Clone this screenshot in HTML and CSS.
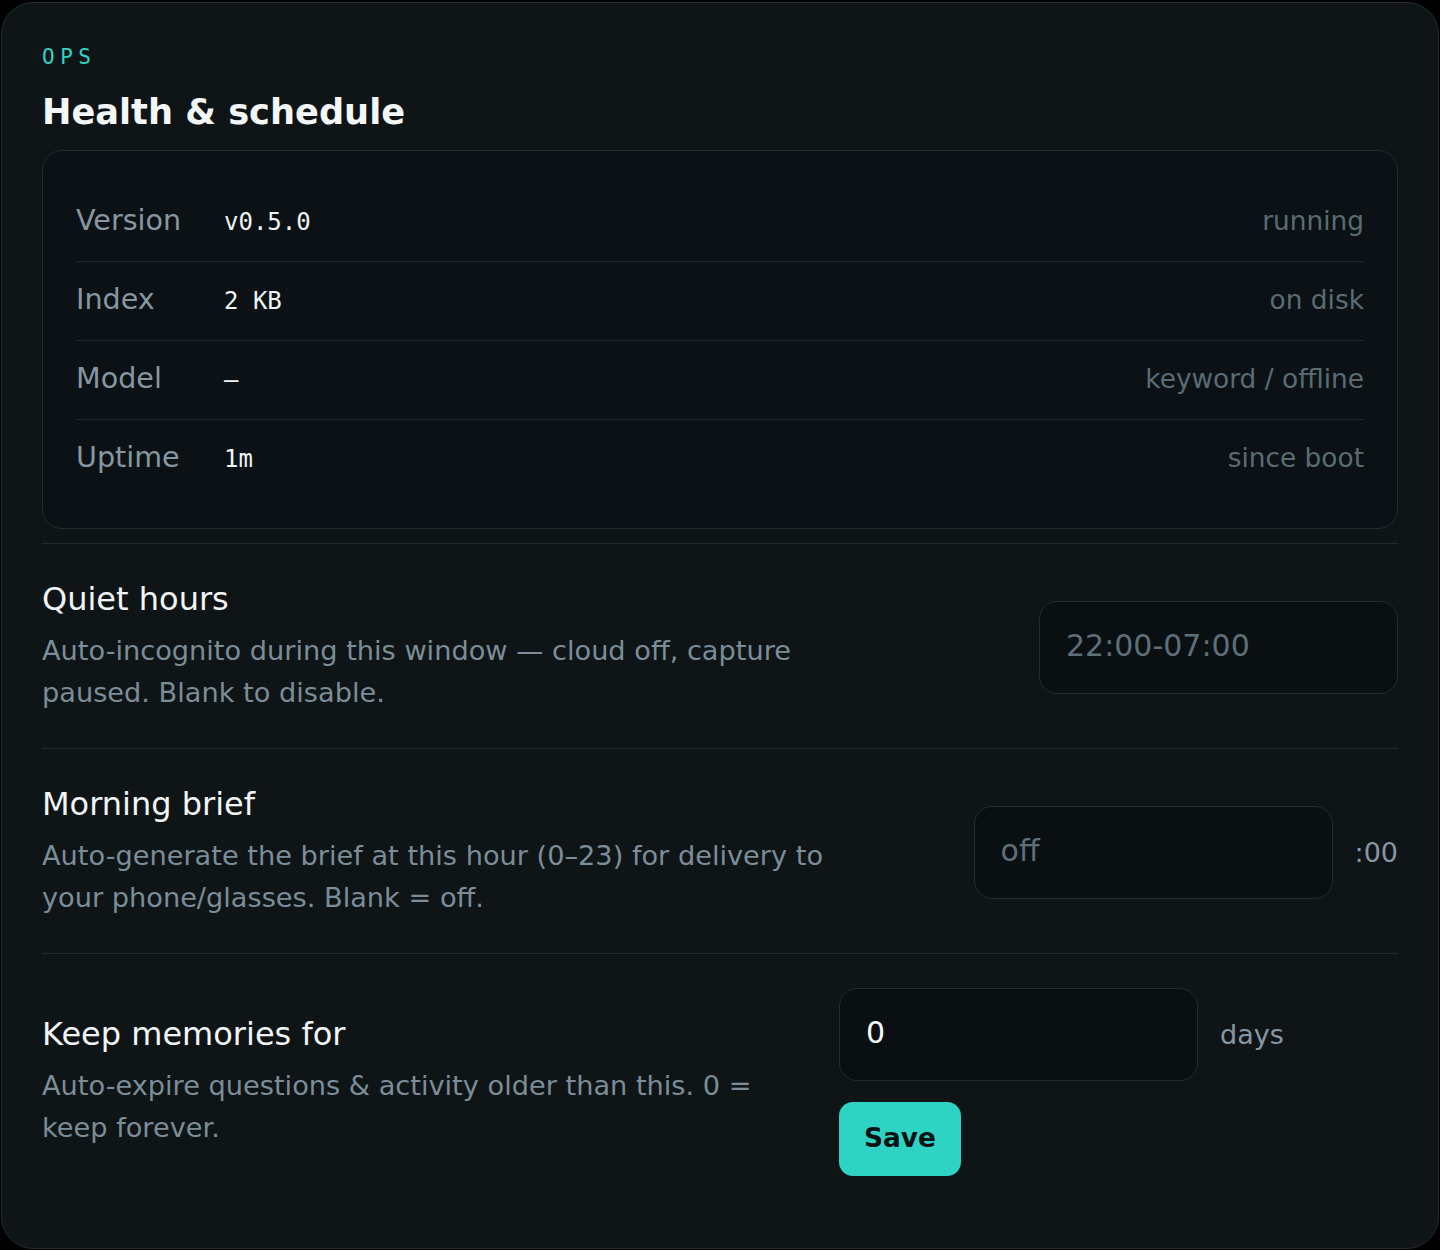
FILE: index.html
```html
<!DOCTYPE html>
<html lang="en">
<head>
    <meta charset="UTF-8">
    <meta name="viewport" content="width=device-width, initial-scale=1.0">
    <title>Health &amp; schedule</title>
    <link rel="stylesheet" href="styles.css">
</head>
<body>

<div class="card">
    <div class="eyebrow">OPS</div>
    <h2 class="card-title">Health &amp; schedule</h2>

    <!-- Status table -->
    <div class="stats">
        <div class="stat-row">
            <span class="stat-label">Version</span>
            <span class="stat-value">v0.5.0</span>
            <span class="stat-note">running</span>
        </div>
        <div class="stat-row">
            <span class="stat-label">Index</span>
            <span class="stat-value">2 KB</span>
            <span class="stat-note">on disk</span>
        </div>
        <div class="stat-row">
            <span class="stat-label">Model</span>
            <span class="stat-value">–</span>
            <span class="stat-note">keyword / offline</span>
        </div>
        <div class="stat-row">
            <span class="stat-label">Uptime</span>
            <span class="stat-value">1m</span>
            <span class="stat-note">since boot</span>
        </div>
    </div>

    <!-- Quiet hours -->
    <div class="setting">
        <div class="setting-text">
            <h3>Quiet hours</h3>
            <p>Auto-incognito during this window — cloud off, capture paused. Blank to disable.</p>
        </div>
        <div class="setting-controls">
            <input type="text" class="field" placeholder="22:00-07:00">
        </div>
    </div>

    <!-- Morning brief -->
    <div class="setting">
        <div class="setting-text">
            <h3>Morning brief</h3>
            <p>Auto-generate the brief at this hour (0–23) for delivery to your phone/glasses. Blank = off.</p>
        </div>
        <div class="setting-controls">
            <input type="text" class="field" placeholder="off">
            <span class="suffix">:00</span>
        </div>
    </div>

    <!-- Retention -->
    <div class="setting last">
        <div class="setting-text">
            <h3>Keep memories for</h3>
            <p>Auto-expire questions &amp; activity older than this. 0 = keep forever.</p>
        </div>
        <div class="setting-controls wide">
            <input type="text" class="field" value="0">
            <span class="suffix">days</span>
            <button type="button" class="save-btn">Save</button>
        </div>
    </div>
</div>

</body>
</html>
```

FILE: styles.css
```css
body {
    margin: 0;
    padding: 2px 1px 0;
    background: #000;
    font-family: "DejaVu Sans", Verdana, sans-serif;
}

.card {
    background: #0f1417;
    border: 1px solid #222c32;
    border-radius: 32px;
    padding: 42px 40px 38px;
}

.eyebrow {
    font-family: "DejaVu Sans Mono", monospace;
    font-size: 21px;
    line-height: 24px;
    letter-spacing: 5.5px;
    color: #2ed3c3;
}

.card-title {
    margin: 21px 0 16px;
    font-size: 35.2px;
    line-height: 44px;
    font-weight: bold;
    color: #f4f7f8;
}

.stats {
    background: #0b1114;
    border: 1px solid #222c32;
    border-radius: 20px;
    padding: 32px 33px 30px;
    margin-bottom: 14px;
}

.stat-row {
    box-sizing: border-box;
    height: 79px;
    display: flex;
    align-items: baseline;
    padding-top: 20px;
    line-height: 34px;
    border-bottom: 1px solid #1f292e;
}

.stat-row:last-child {
    height: 78px;
    border-bottom: none;
}

.stat-label {
    width: 148px;
    font-size: 28.6px;
    color: #8797a2;
}

.stat-value {
    font-family: "DejaVu Sans Mono", monospace;
    font-size: 24px;
    color: #eef3f5;
}

.stat-note {
    margin-left: auto;
    font-size: 26.4px;
    color: #5b6b74;
}

.setting {
    display: flex;
    align-items: center;
    justify-content: space-between;
    gap: 32px;
    padding: 36px 0 34px;
    border-top: 1px solid #1f292e;
}

.setting.last {
    padding-top: 34px;
}

.setting-text {
    flex: 1;
    max-width: 820px;
}

.setting-text h3 {
    margin: 0 0 12px;
    font-size: 32px;
    line-height: 38px;
    font-weight: normal;
    color: #f1f5f6;
}

.setting-text p {
    margin: 0;
    font-size: 27.2px;
    line-height: 42px;
    color: #7b8d98;
}

.setting-controls {
    display: flex;
    align-items: center;
    justify-content: flex-end;
    flex-wrap: wrap;
    gap: 21px 22px;
}

.setting-controls.wide {
    width: 559px;
    justify-content: flex-start;
}

.field {
    box-sizing: border-box;
    width: 359px;
    height: 93px;
    padding: 0 26px 4px;
    background: #0a0f12;
    border: 1px solid #232d33;
    border-radius: 18px;
    font-family: "DejaVu Sans", Verdana, sans-serif;
    font-size: 30px;
    color: #f4f7f8;
    outline: none;
}

.field::placeholder {
    color: #5d6f79;
}

.suffix {
    font-size: 27px;
    color: #8797a2;
}

.save-btn {
    padding: 0 25px 3px;
    height: 74px;
    background: #2ed3c3;
    border: none;
    border-radius: 14px;
    font-family: "DejaVu Sans", Verdana, sans-serif;
    font-size: 26.4px;
    font-weight: bold;
    color: #071215;
    cursor: pointer;
}
```
